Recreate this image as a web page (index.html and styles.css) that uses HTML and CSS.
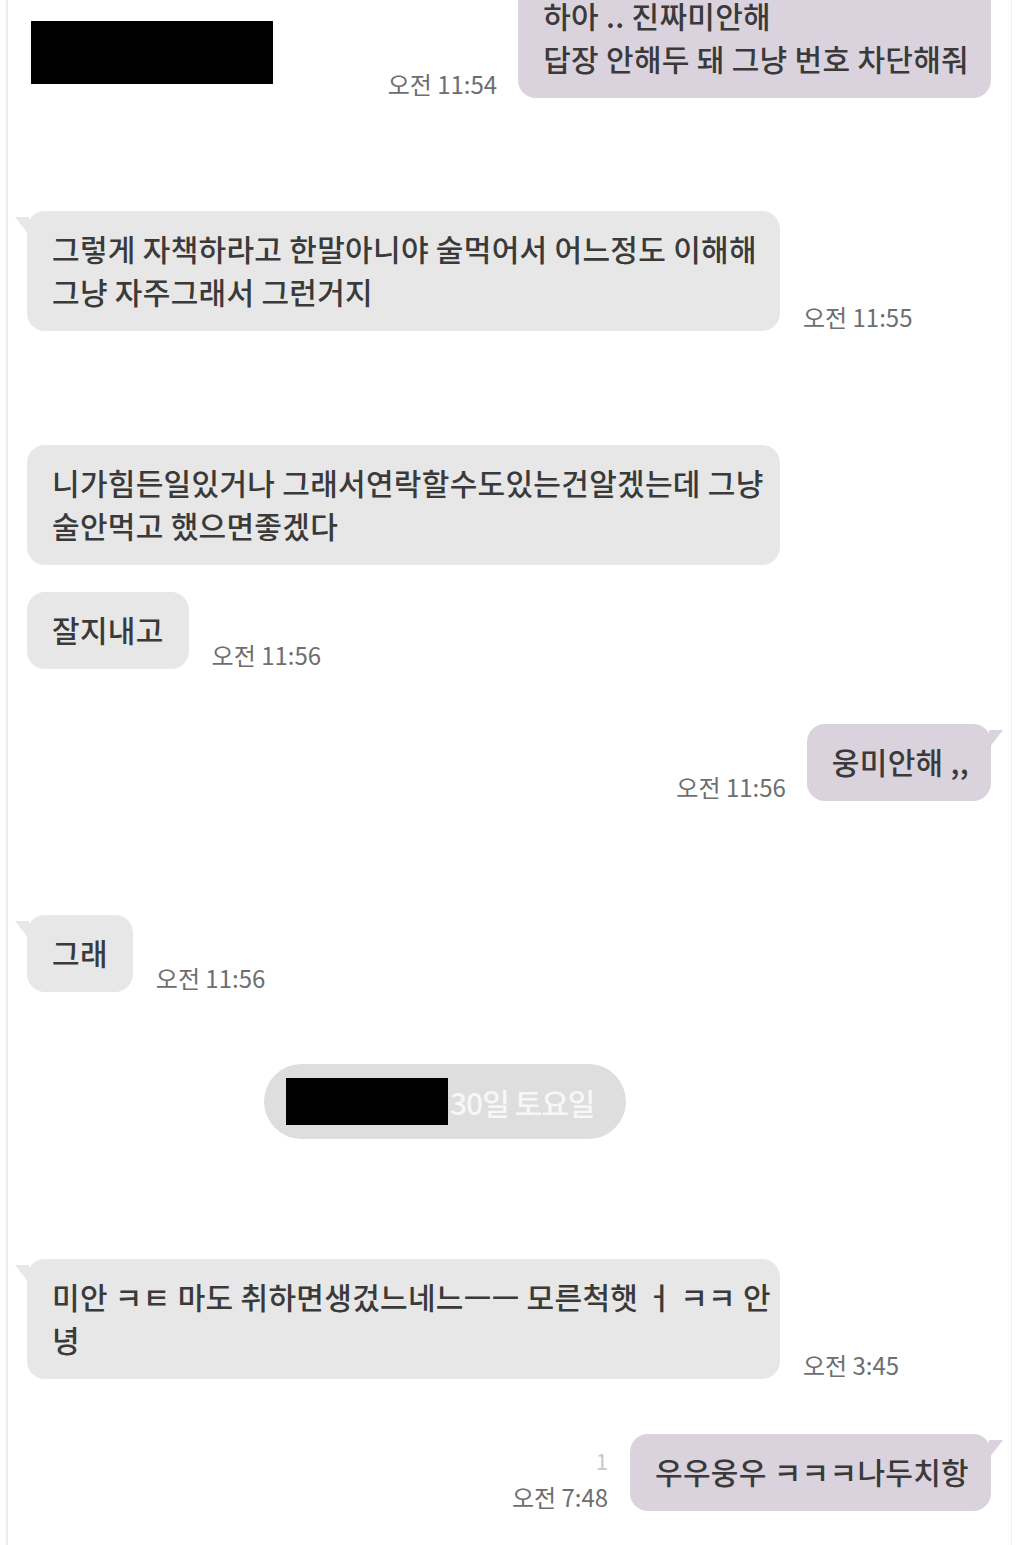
FILE: index.html
```html
<html>
<head>
<meta charset="utf-8">
<link rel="stylesheet" href="styles.css">
</head>
<body>
<div class="screen">

<div class="row row_mine first">
	<div class="redact redact_name"></div>
	<div class="meta"><span class="time">오전 11:54</span></div>
	<div class="bubble mine tail">하아 .. 진짜미안해<br>답장 안해두 돼 그냥 번호 차단해줘</div>
</div>

<div class="row gap_big">
	<div class="bubble theirs tail full">그렇게 자책하라고 한말아니야 술먹어서 어느정도 이해해<br>그냥 자주그래서 그런거지</div>
	<div class="meta"><span class="time">오전 11:55</span></div>
</div>

<div class="row gap_big2">
	<div class="bubble theirs full">니가힘든일있거나 그래서연락할수도있는건알겠는데 그냥<br>술안먹고 했으면좋겠다</div>
</div>

<div class="row gap_small">
	<div class="bubble theirs">잘지내고</div>
	<div class="meta"><span class="time">오전 11:56</span></div>
</div>

<div class="row row_mine gap_mid">
	<div class="meta"><span class="time">오전 11:56</span></div>
	<div class="bubble mine tail">웅미안해 ,,</div>
</div>

<div class="row gap_big2">
	<div class="bubble theirs tail">그래</div>
	<div class="meta"><span class="time">오전 11:56</span></div>
</div>

<div class="date_row">
	<div class="date_pill">
		<div class="redact redact_date"></div>
		<span>30일 토요일</span>
	</div>
</div>

<div class="row gap_big3">
	<div class="bubble theirs tail full">미안 ㅋㅌ 마도 취하면생겄느네느ㅡㅡ 모른척햇 ㅓ ㅋㅋ 안<br>녕</div>
	<div class="meta"><span class="time">오전 3:45</span></div>
</div>

<div class="row row_mine gap_mid">
	<div class="meta meta_right">
		<span class="unread">1</span>
		<span class="time">오전 7:48</span>
	</div>
	<div class="bubble mine tail">우우웅우 ㅋㅋㅋ나두치항</div>
</div>

</div>
</body>
</html>
```

FILE: styles.css
```css
body {
	margin: 0;
	background-color: #ffffff;
	font-family: "Noto Sans CJK KR", "Noto Sans", sans-serif;
}
.screen {
	margin: 0 6px;
	min-height: 1545px;
	border-left: 2px solid #ececec;
	border-right: 1px solid #f0f0f0;
	padding: 0 20px 0 19px;
	overflow: hidden;
}
.row {
	display: flex;
	align-items: flex-end;
	gap: 23px;
}
.row_mine {
	justify-content: flex-end;
	gap: 21px;
}
.first {
	margin-top: -22px;
}
.gap_big { margin-top: 113px; }
.gap_big2 { margin-top: 114px; }
.gap_big3 { margin-top: 120px; }
.gap_mid { margin-top: 55px; }
.gap_small { margin-top: 27px; }

.bubble {
	position: relative;
	padding: 16px 25px 18px 25px;
	border-radius: 18px;
	font-size: 30px;
	font-weight: 500;
	line-height: 43px;
	letter-spacing: 0.3px;
	color: #3a3a3a;
	white-space: nowrap;
}
.theirs {
	background-color: #e7e7e7;
}
.mine {
	background-color: #dad2dc;
	padding-right: 22px;
}
.full {
	width: 703px;
}
.tail::before {
	content: "";
	position: absolute;
	top: 6px;
	width: 14px;
	height: 18px;
	background-color: inherit;
}
.theirs.tail::before {
	left: -12px;
	clip-path: polygon(0 0, 100% 0, 100% 100%);
}
.mine.tail::before {
	right: -12px;
	clip-path: polygon(0 0, 100% 0, 0 100%);
}

.meta {
	display: flex;
	flex-direction: column;
	margin-bottom: 2px;
}
.meta_right {
	align-items: flex-end;
	margin-right: 1px;
}
.time {
	font-size: 24px;
	line-height: 24px;
	letter-spacing: 0;
	color: #6e6e6e;
}
.unread {
	font-size: 22px;
	line-height: 24px;
	color: #c8c8c8;
	margin-bottom: 13px;
}

.redact {
	background-color: #000000;
}
.redact_name {
	width: 242px;
	height: 63px;
	align-self: flex-start;
	margin-top: 43px;
	margin-left: 4px;
	margin-right: auto;
}

.date_row {
	display: flex;
	margin-top: 72px;
	padding-left: 237px;
}
.date_pill {
	display: flex;
	align-items: center;
	gap: 2px;
	height: 75px;
	padding: 0 32px 0 22px;
	border-radius: 38px;
	background-color: #dedede;
	font-size: 30px;
	font-weight: 500;
	letter-spacing: -1px;
	color: #f7f7f7;
}
.redact_date {
	width: 162px;
	height: 47px;
}
```
